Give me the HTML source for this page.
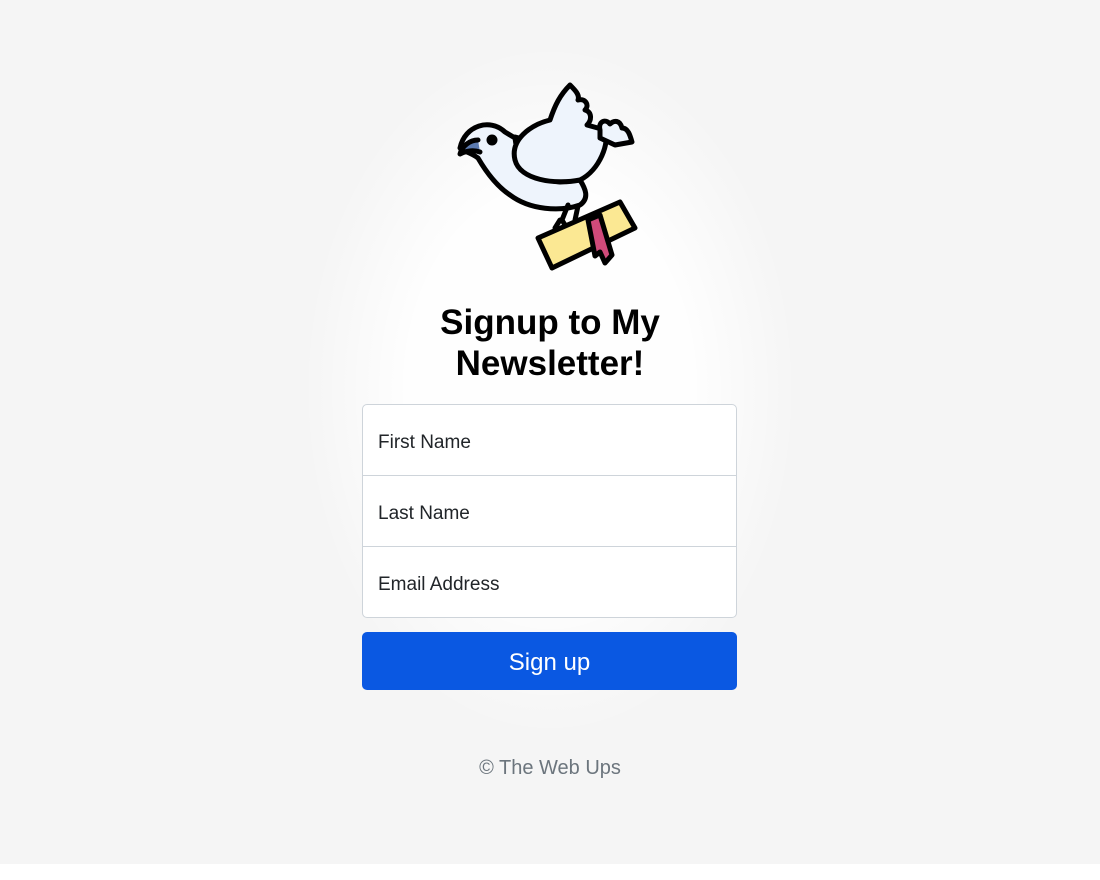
<!DOCTYPE html>
<html><head><meta charset="utf-8"><style>
html,body{margin:0;padding:0}
body{width:1100px;height:880px;background:#fff;font-family:"Liberation Sans",sans-serif;position:relative;overflow:hidden}
.bg{position:absolute;left:0;top:0;width:1100px;height:864px;background:#f5f5f5}
.glow{position:absolute;left:300px;top:40px;width:500px;height:700px;border-radius:50%;background:radial-gradient(ellipse at center,rgba(255,255,255,0.9) 40%,rgba(255,255,255,0) 70%)}
h1{position:absolute;left:330px;width:440px;top:302px;margin:0;text-align:center;font-size:35px;line-height:41px;font-weight:bold;color:#000}
.form{position:absolute;left:362px;top:404px;width:373px;border:1px solid #ced4da;border-radius:5px;background:#fff}
.row{height:71px;border-bottom:1px solid #ced4da;box-sizing:border-box;padding-left:15px;line-height:76px;font-size:19px;color:#212529}
.row:last-child{border-bottom:none;height:70px}
.btn{position:absolute;left:362px;top:632px;width:375px;height:58px;background:#0a58e2;border-radius:5px;color:#fff;text-align:center;line-height:62px;font-size:24px}
.foot{position:absolute;left:0;width:1100px;top:757px;text-align:center;font-size:20px;color:#6c757d}
</style></head><body>
<div class="bg"></div><div class="glow"></div>
<svg style="position:absolute;left:440px;top:70px" width="220" height="210" viewBox="0 0 220 210" fill="none" stroke="#000" stroke-width="5" stroke-linejoin="round" stroke-linecap="round">
<path d="M20 78 C25 55 50 48 65 62 L75 68 C78 95 95 110 120 112 L140 110 C145 118 150 128 140 135 C120 142 90 140 70 125 C55 115 45 100 38 88 C30 82 24 82 20 78Z" fill="#eef4fc"/>
<path d="M75 67 C85 70 95 70 110 66" />
<path d="M75 90 C70 70 90 55 110 50 C115 35 120 25 130 15 C135 20 140 25 138 30 C145 28 150 35 145 40 C152 42 152 50 147 55 L165 60 C170 72 160 100 140 110 C115 115 80 110 75 90Z" fill="#eef4fc"/>
<path d="M160 68 L175 75 L192 72 C190 65 188 58 182 58 C180 50 174 50 170 54 C165 48 158 52 160 60Z" fill="#eef4fc"/>
<path d="M38 70 C30 70 22 76 20 84 C28 80 34 80 40 82" fill="#5b7ab0"/>
<circle cx="52" cy="70" r="3" fill="#000"/>
<path d="M128 135 L122 150 M138 136 L135 150 M120 150 L115 158 M122 150 L128 160 M135 150 L140 160"/>
<path d="M98 168 L180 132 L195 158 L112 198 Z" fill="#fbe893"/>
<path d="M148 150 L160 145 L172 185 L165 193 L160 182 L155 186 Z" fill="#d04a7a"/>
</svg>
<h1>Signup to My<br>Newsletter!</h1>
<div class="form"><div class="row">First Name</div><div class="row">Last Name</div><div class="row">Email Address</div></div>
<div class="btn">Sign up</div>
<div class="foot">© The Web Ups</div>
</body></html>
